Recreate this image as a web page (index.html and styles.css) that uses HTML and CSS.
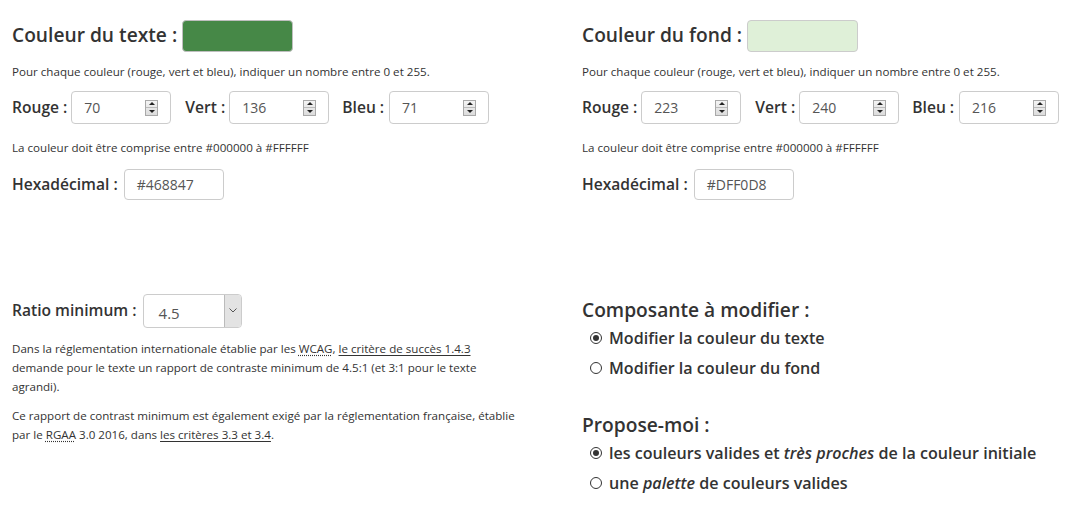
FILE: index.html
```html
<!DOCTYPE html>
<html lang="fr">
<head>
<meta charset="utf-8">
<title>Contraste</title>
<link rel="stylesheet" href="styles.css">
</head>
<body>
<div class="page">
  <section class="col">
    <div class="title-row">
      <h2 class="title">Couleur du texte :</h2>
      <span class="swatch swatch-text"></span>
    </div>
    <p class="hint">Pour chaque couleur (rouge, vert et bleu), indiquer un nombre entre 0 et 255.</p>
    <div class="rgb-row">
      <label class="lbl">Rouge :</label>
      <div class="num"><span class="val">70</span><span class="spin"><i class="up"></i><i class="dn"></i></span></div>
      <label class="lbl">Vert :</label>
      <div class="num"><span class="val">136</span><span class="spin"><i class="up"></i><i class="dn"></i></span></div>
      <label class="lbl">Bleu :</label>
      <div class="num"><span class="val">71</span><span class="spin"><i class="up"></i><i class="dn"></i></span></div>
    </div>
    <p class="note">La couleur doit être comprise entre #000000 à #FFFFFF</p>
    <div class="hex-row">
      <label class="lbl">Hexadécimal :</label>
      <div class="hex"><span class="val">#468847</span></div>
    </div>
  </section>
  <section class="col">
    <div class="title-row">
      <h2 class="title">Couleur du fond :</h2>
      <span class="swatch swatch-bg"></span>
    </div>
    <p class="hint">Pour chaque couleur (rouge, vert et bleu), indiquer un nombre entre 0 et 255.</p>
    <div class="rgb-row">
      <label class="lbl">Rouge :</label>
      <div class="num"><span class="val">223</span><span class="spin"><i class="up"></i><i class="dn"></i></span></div>
      <label class="lbl">Vert :</label>
      <div class="num"><span class="val">240</span><span class="spin"><i class="up"></i><i class="dn"></i></span></div>
      <label class="lbl">Bleu :</label>
      <div class="num"><span class="val">216</span><span class="spin"><i class="up"></i><i class="dn"></i></span></div>
    </div>
    <p class="note">La couleur doit être comprise entre #000000 à #FFFFFF</p>
    <div class="hex-row">
      <label class="lbl">Hexadécimal :</label>
      <div class="hex"><span class="val">#DFF0D8</span></div>
    </div>
  </section>

  <section class="col bottom">
    <div class="ratio-row">
      <label class="lbl">Ratio minimum :</label>
      <div class="select"><span class="sel-val">4.5</span><span class="sel-arrow"><svg width="8" height="5" viewBox="0 0 8 5"><path d="M0.5 0.5 L4 4 L7.5 0.5" fill="none" stroke="#555" stroke-width="1"/></svg></span></div>
    </div>
    <p class="para">Dans la réglementation internationale établie par les <abbr>WCAG</abbr>, <a href="#">le critère de succès 1.4.3</a> demande pour le texte un rapport de contraste minimum de 4.5:1 (et 3:1 pour le texte agrandi).</p>
    <p class="para para2">Ce rapport de contrast minimum est également exigé par la réglementation française, établie par le <abbr>RGAA</abbr> 3.0 2016, dans <a href="#">les critères 3.3 et 3.4</a>.</p>
  </section>
  <section class="col bottom">
    <h3 class="group-title">Composante à modifier :</h3>
    <div class="radio"><span class="dot checked"></span>Modifier la couleur du texte</div>
    <div class="radio"><span class="dot"></span>Modifier la couleur du fond</div>
    <h3 class="group-title second">Propose-moi :</h3>
    <div class="radio"><span class="dot checked"></span>les couleurs valides et&nbsp;<em>très proches</em>&nbsp;de la couleur initiale</div>
    <div class="radio"><span class="dot"></span>une&nbsp;<em>palette</em>&nbsp;de couleurs valides</div>
  </section>
</div>
</body>
</html>
```

FILE: styles.css
```css
* { box-sizing: border-box; }
html, body { margin: 0; padding: 0; background: #fff; }
body {
  font-family: "Open Sans", "DejaVu Sans", sans-serif;
  color: #333;
  width: 1068px;
  height: 509px;
  overflow: hidden;
}
.page {
  display: grid;
  grid-template-columns: 570px 498px;
  padding-top: 20px;
}
.col { padding-left: 12px; }
.title-row {
  display: flex;
  align-items: center;
  gap: 5px;
  height: 31px;
}
.title {
  margin: 0 0 1px;
  font-size: 19.2px;
  font-weight: 600;
  line-height: 28px;
  color: #333;
}
.swatch {
  width: 111px;
  height: 32px;
  border-radius: 4px;
  border: 1px solid #ccc;
  display: block;
}
.swatch-text { background: #468847; border-color: #bfbfbf; }
.swatch-bg { background: #dff0d8; }
.hint, .note {
  margin: 12px 0 0;
  font-size: 11.6px;
  line-height: 18px;
  color: #333;
}
.note { margin-top: 15px; }
.rgb-row, .hex-row, .ratio-row {
  display: flex;
  align-items: center;
}
.rgb-row { margin-top: 10px; height: 33px; }
.hex-row { margin-top: 12px; height: 31px; }
.lbl {
  font-size: 15.6px;
  font-weight: 600;
  color: #333;
  margin-right: 4px;
  padding-bottom: 2px;
}
.rgb-row .lbl:nth-child(3) { margin-left: 14px; margin-right: 4px; }
.rgb-row .lbl:nth-child(5) { margin-left: 13px; margin-right: 5px; }
.num, .hex {
  width: 100px;
  height: 33px;
  border: 1px solid #ccc;
  border-radius: 4px;
  display: flex;
  align-items: center;
  padding-left: 12px;
  font-size: 14px;
  color: #555;
}
.hex { height: 31px; margin-left: 2px; padding-left: 12px; }
.val { flex: 1; }
.spin {
  width: 13px;
  height: 16px;
  margin-right: 12px;
  border: 1px solid #a9a9a9;
  background: linear-gradient(#f4f4f4, #dcdcdc);
  display: flex;
  flex-direction: column;
}
.spin i {
  flex: 1;
  display: flex;
  align-items: center;
  justify-content: center;
}
.spin i::before {
  content: "";
  border-left: 3px solid transparent;
  border-right: 3px solid transparent;
}
.spin .up { border-bottom: 1px solid #bbb; }
.spin .up::before { border-bottom: 3px solid #222; }
.spin .dn::before { border-top: 3px solid #222; }

.bottom { margin-top: 94px; }
.ratio-row { height: 34px; }
.ratio-row .lbl { margin-right: 6px; }
.select {
  width: 99px;
  height: 34px;
  border: 1px solid #ccc;
  border-radius: 4px;
  display: flex;
  overflow: hidden;
  font-size: 15px;
  color: #555;
}
.sel-val {
  flex: 1;
  padding-left: 15px;
  padding-top: 8px;
  line-height: 20px;
}
.sel-arrow {
  width: 17px;
  background: #e3e3e3;
  border-left: 1px solid #bbb;
  display: flex;
  align-items: center;
  justify-content: center;
  padding-bottom: 2px;
}
.para {
  margin: 11px 0 0;
  width: 510px;
  font-size: 11.6px;
  line-height: 19px;
  color: #333;
}
.para2 { margin-top: 10px; }
abbr {
  text-decoration: underline dotted;
  text-underline-offset: 2px;
}
a {
  color: #333;
  text-decoration: underline;
  text-underline-offset: 2px;
}
.group-title {
  margin: 2px 0 0;
  font-size: 19.2px;
  font-weight: 600;
  line-height: 27px;
  color: #333;
}
.group-title.second { margin-top: 28px; }
.radio {
  display: flex;
  align-items: center;
  height: 30px;
  padding-left: 8px;
  font-size: 16.1px;
  font-weight: 600;
  color: #333;
}
.dot {
  width: 12px;
  height: 12px;
  border-radius: 50%;
  border: 1px solid #333;
  margin-right: 7px;
  display: flex;
  align-items: center;
  justify-content: center;
  background: #fff;
}
.dot.checked::after {
  content: "";
  width: 6px;
  height: 6px;
  border-radius: 50%;
  background: #333;
}
em { font-style: italic; }
```
